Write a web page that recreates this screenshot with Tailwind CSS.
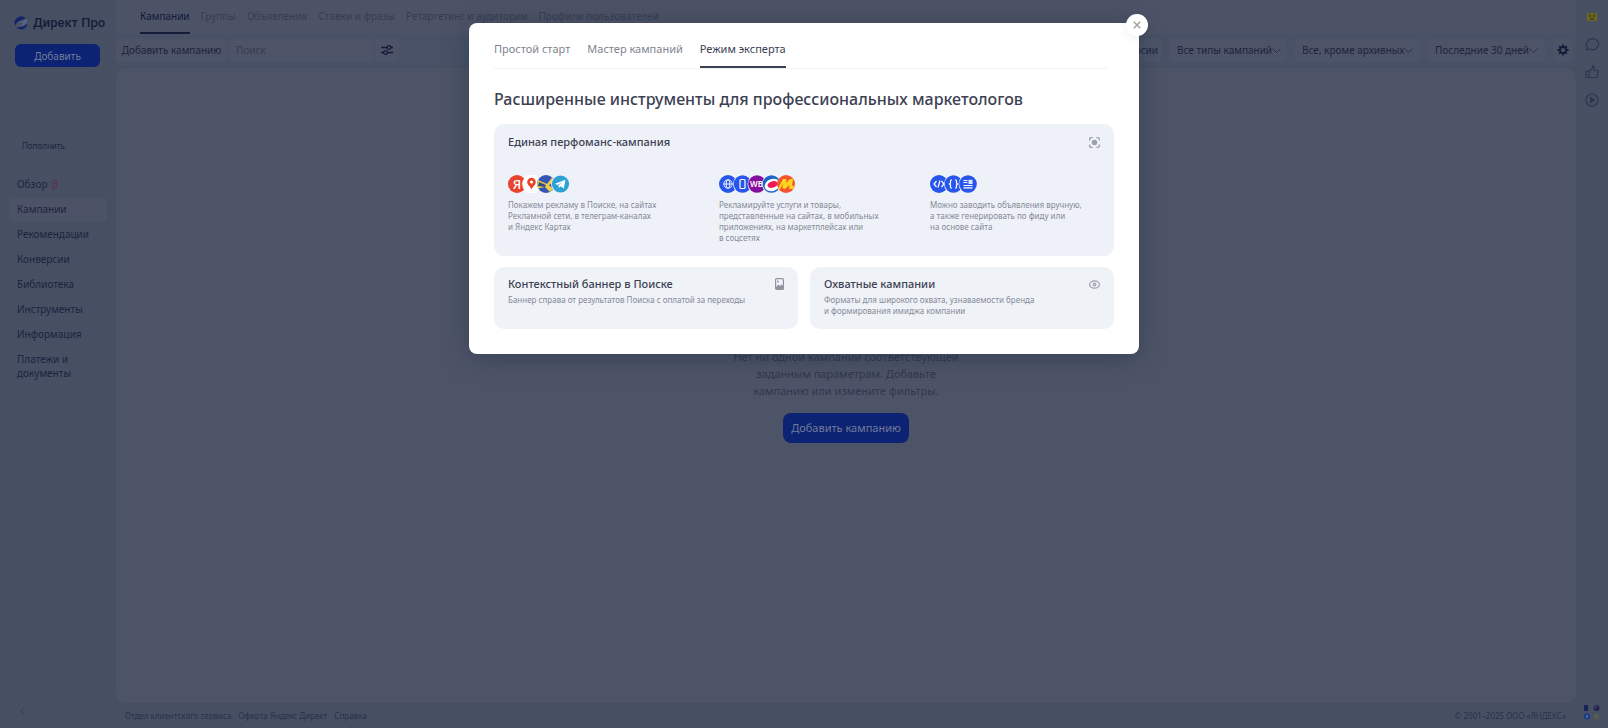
<!DOCTYPE html>
<html lang="ru">
<head>
<meta charset="utf-8">
<title>Директ Про</title>
<script src="https://cdn.jsdelivr.net/npm/@tailwindcss/browser@4"></script>
</head>
<body class="min-h-screen bg-[#475063] font-['Noto_Sans','Open_Sans',sans-serif] text-[10px] leading-4 text-[#1c2340]">
<div class="flex min-h-screen">
  <aside class="flex w-[116px] shrink-0 flex-col pt-[14px]">
    <a href="#" class="ml-[14px] flex items-center gap-[5px] font-['Roboto',sans-serif] text-[13px] leading-[18px] font-medium whitespace-nowrap text-[#151d38]">
      <svg class="size-[14px] shrink-0" viewBox="0 0 14 14"><path d="M11.500 2A6.500 6.500 0 0 0 1.500 10Q1.500 6 6 4.500T11.500 2Z" fill="#12246e"/><path d="M4.500 6.500Q9 6 12.500 2.800Q14 6 12.500 7.500Q9 10.500 5 9.500Q8.500 9 9.500 6.500Q7 7.200 4.500 6.500Z" fill="#59638a"/><path d="M2.500 11Q9 12 13.500 7.500Q12.500 13 7.500 13.500Q4.500 13.500 2.500 11Z" fill="#12246e"/></svg>
      Директ Про
    </a>
    <button class="mt-3 ml-[15px] h-[23px] w-[85px] rounded-md bg-[#0c2272] text-[10px] text-[#727c9c]">Добавить</button>
    <button class="mt-[71px] ml-[22px] self-start text-[8px] leading-4 text-[#1c2340]">Пополнить</button>
    <nav class="mt-[18px] flex flex-col gap-px px-[9px]">
      <a href="#" class="rounded px-2 py-1">Обзор <span class="ml-[2px] text-[#652944]">β</span></a>
      <a href="#" class="rounded bg-[#4d5367] px-2 py-1">Кампании</a>
      <a href="#" class="rounded px-2 py-1">Рекомендации</a>
      <a href="#" class="rounded px-2 py-1">Конверсии</a>
      <a href="#" class="rounded px-2 py-1">Библиотека</a>
      <a href="#" class="rounded px-2 py-1">Инструменты</a>
      <a href="#" class="rounded px-2 py-1">Информация</a>
      <a href="#" class="rounded px-2 py-[5px] leading-[14px]">Платежи и документы</a>
    </nav>
    <button class="mt-auto mb-3 ml-[18px] size-[10px]" aria-label="Свернуть"><svg viewBox="0 0 10 10" fill="none" stroke="#353f54"><path d="M6.500 1.500L3 5L6.500 8.500"/></svg></button>
  </aside>

  <div class="flex min-w-0 grow flex-col">
    <nav class="flex h-[34px] gap-[11px] bg-[#4d5366] pl-6 whitespace-nowrap text-[#363d52]">
      <a href="#" class="border-b-2 border-[#141c3a] pt-2 text-[#10183a]">Кампании</a>
      <a href="#" class="pt-2">Группы</a>
      <a href="#" class="pt-2">Объявления</a>
      <a href="#" class="pt-2">Ставки и фразы</a>
      <a href="#" class="pt-2">Ретаргетинг и аудитории</a>
      <a href="#" class="pt-2">Профили пользователей</a>
    </nav>
    <div class="flex h-8 items-center gap-2 bg-[#495166] pr-[3px] whitespace-nowrap">
      <div class="flex">
        <button class="h-[23px] w-[111px] rounded bg-[#4e5467] text-[10px]">Добавить кампанию</button>
        <input type="search" aria-label="Поиск" placeholder="Поиск" class="ml-[3px] h-[23px] w-[143px] rounded bg-[#4e5467] px-[6px] text-[10px] placeholder:text-[#363d52]">
        <button aria-label="Фильтры" class="ml-[2px] flex h-[23px] w-6 items-center justify-center rounded bg-[#4e5467]">
          <svg class="size-[12px]" viewBox="0 0 12 12" fill="none" stroke="#141c3a" stroke-width="1.400"><path d="M0 3.500H6M10 3.500H12M0 8.500H2.500M6.500 8.500H12"/><circle cx="8" cy="3.500" r="1.900"/><circle cx="4.500" cy="8.500" r="1.900"/></svg>
        </button>
      </div>
      <button class="ml-auto h-[23px] rounded bg-[#4e5467] px-1 text-[10px]">Конверсии</button>
      <button class="flex h-[23px] w-[117px] items-center justify-between rounded bg-[#4e5467] px-[7px] text-[10px]">Все типы кампаний<svg class="size-[9px] shrink-0" viewBox="0 0 9 9" fill="none" stroke="#293149"><path d="M.5 2.500L4.500 6.500L8.500 2.500"/></svg></button>
      <button class="flex h-[23px] w-[125px] items-center justify-between rounded bg-[#4e5467] px-[7px] text-[10px]">Все, кроме архивных<svg class="size-[9px] shrink-0" viewBox="0 0 9 9" fill="none" stroke="#293149"><path d="M.5 2.500L4.500 6.500L8.500 2.500"/></svg></button>
      <button class="flex h-[23px] w-[117px] items-center justify-between rounded bg-[#4e5467] px-[7px] text-[10px]">Последние 30 дней<svg class="size-[9px] shrink-0" viewBox="0 0 9 9" fill="none" stroke="#293149"><path d="M.5 2.500L4.500 6.500L8.500 2.500"/></svg></button>
      <button aria-label="Настройки" class="flex h-[23px] w-[20px] items-center justify-center rounded bg-[#4e5467]">
        <svg class="size-[12px]" viewBox="0 0 12 12" fill="none" stroke="#141c3a"><circle cx="6" cy="6" r="3" stroke-width="1.800"/><path stroke-width="1.800" d="M6 0.500V3M6 9V11.500M.5 6H3M9 6H11.500M2.100 2.100L3.900 3.900M8.100 8.100L9.900 9.900M2.100 9.900L3.900 8.100M8.100 3.900L9.900 2.100"/></svg>
      </button>
    </div>
    <main class="mt-[2px] flex grow flex-col items-center rounded-[10px] bg-[#4e5467] pt-[280px]">
      <p class="text-center text-[11px] leading-[17px] text-[#30374e]">Нет ни одной кампании соответствующей<br>заданным параметрам. Добавьте<br>кампанию или измените фильтры.</p>
      <button class="mt-[14px] h-[30px] w-[126px] rounded-lg bg-[#0c2272] text-[11px] whitespace-nowrap text-[#727c9c]">Добавить кампанию</button>
    </main>
    <footer class="flex h-[25px] items-center gap-[7px] pr-[10px] pl-[9px] text-[8px] text-[#283049]">
      <a href="#">Отдел клиентского сервиса</a>
      <a href="#">Оферта Яндекс Директ</a>
      <a href="#">Справка</a>
      <span class="ml-auto">© 2001–2025 ООО «ЯНДЕКС»</span>
    </footer>
  </div>

  <aside class="flex w-8 shrink-0 flex-col items-center gap-[14px] pt-[9px] pb-2">
    <svg class="size-[14px]" viewBox="0 0 14 14"><path d="M2 3L5 5L7 3L9 5L12 3V12H2Z" fill="#6b651e"/><path d="M4 7H6M8 7H10M5 10H9" stroke="#3c3d29" stroke-width="1.500"/></svg>
    <svg class="size-[14px]" viewBox="0 0 14 14" fill="none" stroke="#2b3650" stroke-width="1.200"><path d="M1.500 12.700L2.300 10A6 5.500 0 1 1 5 12.200Z"/></svg>
    <svg class="size-[14px]" viewBox="0 0 14 14" fill="none" stroke="#2b3650" stroke-width="1.200"><path d="M1 6H4V12.500H1ZM4 6.500L7 4L7.500 1L9 1.500V5.500H13L12 12.500H4"/></svg>
    <svg class="size-[14px]" viewBox="0 0 14 14" fill="none" stroke="#2b3650" stroke-width="1.200"><circle cx="7" cy="7" r="6"/><path d="M5.500 4.500L9.500 7L5.500 9.500Z" fill="#2b3650"/></svg>
    <svg class="mt-auto size-4" viewBox="0 0 16 16"><path d="M0 1H4V7H0Z" fill="#1b2160"/><path d="M4 1H6V7H4Z" fill="#38574b"/><circle cx="12.500" cy="4" r="3" fill="#24204f"/><path d="M10 3.500L12.500 1V4Z" fill="#574a4c"/><circle cx="3" cy="12.500" r="3" fill="#143c85"/><path d="M3 11V14" stroke="#8790a5"/><path d="M10 10H15V15H10Z" fill="#555b4f"/></svg>
  </aside>
</div>

<div role="dialog" aria-modal="true" aria-labelledby="dlg-title" class="absolute top-[23px] left-1/2 w-[670px] -translate-x-1/2 rounded-lg bg-white px-[25px] pb-[25px] text-[#3c4152] shadow-[0_4px_24px_rgba(30,50,70,0.5)]">
  <button aria-label="Закрыть" class="absolute -top-[9px] -right-[9px] flex size-[22px] items-center justify-center rounded-full bg-white shadow-[0_3px_10px_rgba(0,0,0,0.06)]"><svg class="size-2" viewBox="0 0 8 8" stroke="#a0a29f" stroke-width="1.500"><path d="M.8.8L7.200 7.200M7.200.8L.8 7.200"/></svg></button>
  <div role="tablist" class="mr-[7px] flex h-[46px] gap-[17px] border-b border-[#f1f2f4] text-[11px] leading-4 whitespace-nowrap text-[#80848f]">
    <button role="tab" class="border-b-2 border-transparent pt-[9px]">Простой старт</button>
    <button role="tab" class="border-b-2 border-transparent pt-[9px]">Мастер кампаний</button>
    <button role="tab" aria-selected="true" class="border-b-2 border-[#3c4152] pt-[9px] text-[#3c4152]">Режим эксперта</button>
  </div>
  <h2 id="dlg-title" class="mt-[18px] text-[16px] leading-6 font-medium whitespace-nowrap">Расширенные инструменты для профессиональных маркетологов</h2>
  <section class="mt-[13px] h-[132px] rounded-[10px] bg-[#eef1f7] px-[14px] pt-[10px]">
    <div class="flex items-center justify-between">
      <h3 class="text-[11px] leading-4 font-medium">Единая перфоманс-кампания</h3>
      <svg class="size-[11px]" viewBox="0 0 11 11" fill="none" stroke="#9b9fa9" stroke-width="1.300"><path d="M.7 3.500V2Q.7.7 2 .7H3.500M7.500.7H9Q10.300.7 10.300 2V3.500M10.300 7.500V9Q10.300 10.300 9 10.300H7.500M3.500 10.300H2Q.7 10.300.7 9V7.500"/><circle cx="5.500" cy="5.500" r="2.700" fill="#9b9fa9" stroke="none"/></svg>
    </div>
    <div class="mt-[25px] grid grid-cols-[211px_211px_1fr] text-[8px] leading-[11px] text-[#858a98]">
      <div>
        <svg class="h-[18px] w-[62px]" viewBox="0 0 62 18">
          <circle cx="9" cy="9" r="9" fill="#e8432d"/><text x="9" y="14" text-anchor="middle" font-size="13" font-weight="500" fill="#fff">Я</text>
          <circle cx="23.500" cy="9" r="9.300" fill="#fff"/><path d="M23.500 14.500C22.500 11.500 19.200 10 19.200 7A4.300 4.300 0 0 1 27.800 7C27.800 10 24.500 11.500 23.500 14.500Z" fill="#e8432d"/><circle cx="23.500" cy="7" r="1.500" fill="#fff"/>
          <circle cx="38" cy="9" r="9" fill="#3355b5"/><path d="M30 5L39 9L44 2.500L46.500 6L41 10L45 14L42 17L37 12L30 13.500L29 9Z" fill="#efcd4a"/><path d="M31 7L38 10L37 12L30 11Z" fill="#344a88"/>
          <circle cx="52.500" cy="9" r="9.500" fill="#eef1f7"/><circle cx="52.500" cy="9" r="8.600" fill="#2ba1d6"/><path d="M47 8.800L57.500 4.800L55.800 13.500L52.500 11.300L50.800 13L50.500 10.300L54.500 7L49.500 9.900Z" fill="#fff"/>
        </svg>
        <p class="mt-[6px]">Покажем рекламу в Поиске, на сайтах<br>Рекламной сети, в телеграм-каналах<br>и Яндекс Картах</p>
      </div>
      <div>
        <svg class="h-[18px] w-[76px]" viewBox="0 0 76 18">
          <circle cx="9" cy="9" r="9" fill="#2956ea"/><g fill="none" stroke="#fff" stroke-width=".9"><circle cx="9" cy="9" r="4.200"/><ellipse cx="9" cy="9" rx="1.900" ry="4.200"/><path d="M4.800 9H13.200"/></g>
          <circle cx="23.500" cy="9" r="9.500" fill="#eef1f7"/><circle cx="23.500" cy="9" r="8.800" fill="#2956ea"/><rect x="21" y="4.500" width="5" height="9" rx="1" fill="none" stroke="#fff" stroke-width="1.200"/>
          <circle cx="38" cy="9" r="9.500" fill="#eef1f7"/><circle cx="38" cy="9" r="8.800" fill="#86109c"/><text x="37.500" y="12" text-anchor="middle" font-size="8" font-weight="600" fill="#fff">WB</text>
          <circle cx="52.500" cy="9" r="9.500" fill="#eef1f7"/><circle cx="52.500" cy="9" r="8.800" fill="#1c64c8"/><ellipse cx="53.500" cy="10" rx="8" ry="6" transform="rotate(-18 53.500 10)" fill="#fff"/><ellipse cx="53.500" cy="9.500" rx="5.200" ry="3.200" transform="rotate(-18 53.500 9.500)" fill="#ec185a"/>
          <circle cx="67" cy="9" r="9" fill="#f4552c"/><path d="M59 13.500L64 4H67.500L67 8L71 4H74L73 11L75.500 10.500L74 14H70L70.500 10L66 14L63.500 13L64 9L61 14.500Z" fill="#ffd51f"/>
        </svg>
        <p class="mt-[6px]">Рекламируйте услуги и товары,<br>представленные на сайтах, в мобильных<br>приложениях, на маркетплейсах или<br>в соцсетях</p>
      </div>
      <div>
        <svg class="h-[18px] w-[48px]" viewBox="0 0 48 18">
          <circle cx="9" cy="9" r="9" fill="#2956ea"/><path d="M6.500 6L4 9L6.500 12M11.500 6L14 9L11.500 12M10 5.500L8 12.500" fill="none" stroke="#fff" stroke-width="1.200"/>
          <circle cx="23.500" cy="9" r="9.500" fill="#eef1f7"/><circle cx="23.500" cy="9" r="8.800" fill="#2956ea"/><path d="M22 5H21Q20.500 5 20.500 6V8L19.500 9L20.500 10V12Q20.500 13 21 13H22M25 5H26Q26.500 5 26.500 6V8L27.500 9L26.500 10V12Q26.500 13 26 13H25" fill="none" stroke="#fff" stroke-width="1.200"/>
          <circle cx="38" cy="9" r="9.500" fill="#eef1f7"/><circle cx="38" cy="9" r="8.800" fill="#2956ea"/><path d="M33.500 5.500H37.500M33.500 7.500H37.500M33.500 10.500H42.500M33.500 12.800H42.500" stroke="#fff" stroke-width="1.200"/><path d="M38.500 4.800H42.500V9H38.500Z" fill="#dfe6ff"/>
        </svg>
        <p class="mt-[6px]">Можно заводить объявления вручную,<br>а также генерировать по фиду или<br>на основе сайта</p>
      </div>
    </div>
  </section>
  <div class="mt-[11px] grid grid-cols-2 gap-3">
    <section class="h-[62px] rounded-[10px] bg-[#eff2f7] px-[14px] pt-[9px]">
      <div class="flex items-center justify-between"><h3 class="text-[11px] leading-4 font-medium">Контекстный баннер в Поиске</h3>
      <svg class="h-[12px] w-[9px]" viewBox="0 0 9 12"><rect x=".6" y=".6" width="7.800" height="10.800" rx="1" fill="none" stroke="#8f939f" stroke-width="1.200"/><path d="M1 9L3.500 6.500L5 8L6.500 6.500L8 8V11H1Z" fill="#8f939f"/><circle cx="3" cy="3.500" r=".9" fill="#8f939f"/></svg></div>
      <p class="mt-[2px] text-[8px] leading-[11px] text-[#858a98]">Баннер справа от результатов Поиска с оплатой за переходы</p>
    </section>
    <section class="h-[62px] rounded-[10px] bg-[#eff2f7] px-[14px] pt-[9px]">
      <div class="flex items-center justify-between"><h3 class="text-[11px] leading-4 font-medium">Охватные кампании</h3>
      <svg class="h-[9px] w-[11px]" viewBox="0 0 11 9" fill="none" stroke="#9b9fa9" stroke-width="1.200"><ellipse cx="5.500" cy="4.500" rx="4.900" ry="3.700"/><circle cx="5.500" cy="4.500" r="1.300"/></svg></div>
      <p class="mt-[2px] text-[8px] leading-[11px] text-[#858a98]">Форматы для широкого охвата, узнаваемости бренда<br>и формирования имиджа компании</p>
    </section>
  </div>
</div>
</body>
</html>
